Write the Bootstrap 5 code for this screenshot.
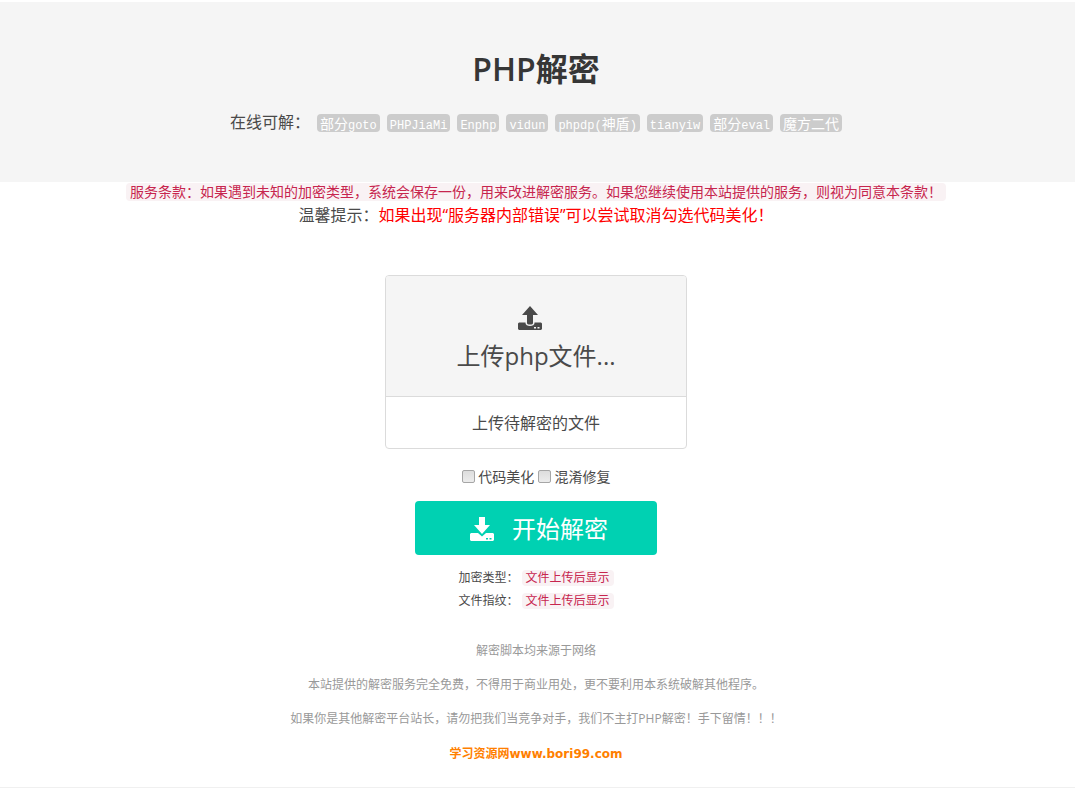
<!DOCTYPE html>
<html lang="zh-CN">
<head>
<meta charset="utf-8">
<meta name="viewport" content="width=device-width, initial-scale=1">
<title>PHP解密</title>
<link href="https://cdn.jsdelivr.net/npm/bootstrap@5.3.0/dist/css/bootstrap.min.css" rel="stylesheet">
<style>
body{font-family:"Open Sans","Noto Sans CJK SC",sans-serif;font-size:16px;line-height:24px;color:#4a4a4a;background:#fff}
.page{padding-right:3px}
.hero{background:#f5f5f5;margin-top:2px;padding:47px 3px 48px 0}
.hero h1{font-size:32px;line-height:40px;font-weight:600;color:#363636;margin-bottom:21px}
.tags{column-gap:7px;line-height:24px}
.kind{background:#ccc;color:#fff;border-radius:4px;padding:0 3px;font:14px/18px "Noto Sans CJK SC",sans-serif;height:18px;margin-top:2px}
.kind span{font-family:"Liberation Mono",monospace;font-size:12px;line-height:12px}
.term{background:#f9f2f4;color:#c7254e;border-radius:4px;padding:0 4px;font-size:14px;line-height:18px;display:inline-block}
.terms{margin:1px 0 2px}
.term-s{font-size:12px;line-height:16px}
.tip{color:red}
.drop{width:302px;border:1px solid #dbdbdb;border-radius:4px;overflow:hidden;margin-top:48px;cursor:pointer}
.drop-top{background:#f5f5f5;border-bottom:1px solid #dbdbdb;padding:28px 0 20px;font-size:24px;line-height:40px;gap:4px}
.drop-top svg{margin-right:12px}
.drop-name{padding:14px 0 13px}
.opts{font-size:14px;line-height:24px;margin-top:16px}
.opts input{width:13px;height:13px;margin:0 0 4px;vertical-align:middle;appearance:none;border:1px solid #a6a6a6;border-radius:2px;background:linear-gradient(#ddd,#ececec)}
.opts input:checked{background:#00d1b2}
.start{--bs-btn-bg:#00d1b2;--bs-btn-color:#fff;--bs-btn-hover-bg:#00c4a7;--bs-btn-hover-color:#fff;--bs-btn-active-bg:#00b89c;--bs-btn-active-color:#fff;width:242px;height:54px;border:0;border-radius:4px;font-size:24px;line-height:36px;margin-top:12px;gap:18px;padding:8px 12px 6px 18px}
.info{font-size:12px;line-height:23px;margin-top:11px}
.foot{font-size:12px;line-height:20px;color:#999;margin-top:29px;padding-bottom:23px;border-bottom:1px solid #f0f0f0}
.foot p{margin-bottom:14px}
.site{display:block;margin-top:15px;color:#ff7f00;font:bold 12px/20px "DejaVu Sans","Noto Sans CJK SC",sans-serif;text-decoration:none}
</style>
</head>
<body>
<header class="hero text-center">
  <h1>PHP解密</h1>
  <div class="tags d-flex flex-wrap justify-content-center align-items-center">
    <div>在线可解：</div>
    <div class="kind">部分<span>goto</span></div>
    <div class="kind"><span>PHPJiaMi</span></div>
    <div class="kind"><span>Enphp</span></div>
    <div class="kind"><span>vidun</span></div>
    <div class="kind"><span>phpdp(</span>神盾<span>)</span></div>
    <div class="kind"><span>tianyiw</span></div>
    <div class="kind">部分<span>eval</span></div>
    <div class="kind">魔方二代</div>
  </div>
</header>
<main class="page text-center d-flex flex-column align-items-center">
  <div class="term terms">服务条款：如果遇到未知的加密类型，系统会保存一份，用来改进解密服务。如果您继续使用本站提供的服务，则视为同意本条款！</div>
  <div>温馨提示：<span class="tip">如果出现“服务器内部错误”可以尝试取消勾选代码美化！</span></div>
  <label class="drop" for="file">
    <input class="visually-hidden" type="file" id="file" accept=".php">
    <span class="drop-top d-flex flex-column align-items-center">
      <svg width="24" height="28" viewBox="0 0 24 28" fill="#4a4a4a" aria-hidden="true"><path d="M12 2l8 9h-5v8c0 1-1 1.500-3 1.500S9 20 9 19v-8H4z"/><path fill-rule="evenodd" d="M1 18.500h6.500v.5c0 2 2 3 4.500 3s4.500-1 4.500-3v-.5H23l1 1V25l-1 1H1l-1-1v-5.500zM16 23h2v1.500h-2zm3.500 0h2v1.500h-2z"/></svg>
      <span>上传php文件...</span>
    </span>
    <span class="drop-name d-block">上传待解密的文件</span>
  </label>
  <div class="opts">
    <label><input type="checkbox"> 代码美化</label>
    <label><input type="checkbox"> 混淆修复</label>
  </div>
  <button type="button" class="btn start d-flex align-items-center justify-content-center">
    <svg width="24" height="24" viewBox="0 0 24 24" fill="#fff" aria-hidden="true"><path d="M9 0h6v8h5l-8 9-8-9h5z"/><path fill-rule="evenodd" d="M1 16h7l4 3.500 4-3.500h7l1 1v6l-1 1H1l-1-1v-6zM16 21h2v1.500h-2zm3.500 0h2v1.500h-2z"/></svg>
    <span>开始解密</span>
  </button>
  <div class="info">
    <div>加密类型： <span class="term term-s">文件上传后显示</span></div>
    <div>文件指纹： <span class="term term-s">文件上传后显示</span></div>
  </div>
</main>
<footer class="foot page text-center">
  <p>解密脚本均来源于网络</p>
  <p>本站提供的解密服务完全免费，不得用于商业用处，更不要利用本系统破解其他程序。</p>
  <p>如果你是其他解密平台站长，请勿把我们当竞争对手，我们不主打PHP解密！手下留情！！！</p>
  <a class="site" href="#">学习资源网www.bori99.com</a>
</footer>
<script src="https://cdn.jsdelivr.net/npm/bootstrap@5.3.0/dist/js/bootstrap.bundle.min.js"></script>
</body>
</html>
